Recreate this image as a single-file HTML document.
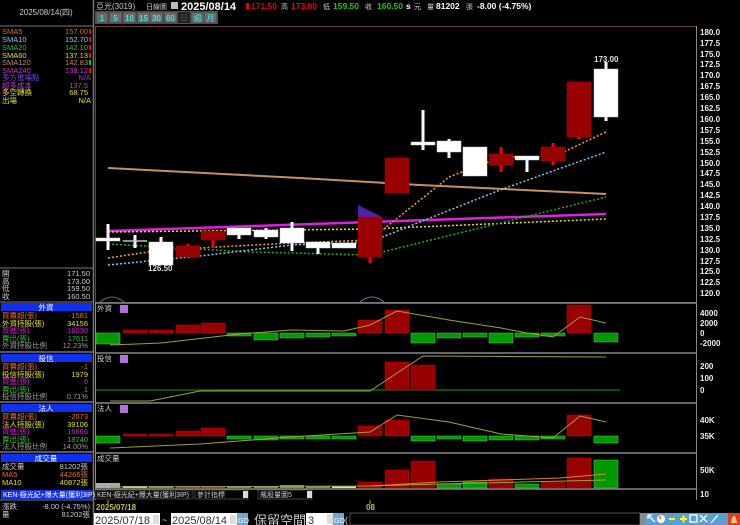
<!DOCTYPE html>
<html><head><meta charset="utf-8"><style>
html,body{margin:0;padding:0;background:#000;width:740px;height:525px;overflow:hidden}
svg{display:block}
text{font-family:"Liberation Sans","Noto Sans CJK TC",sans-serif}
</style></head><body>
<svg width="740" height="525" viewBox="0 0 740 525" xmlns="http://www.w3.org/2000/svg">
<rect width="740" height="525" fill="#000"/>
<rect x="0" y="0" width="93" height="489" fill="#000"/>
<line x1="93.5" y1="0" x2="93.5" y2="525" stroke="#777" stroke-width="1.5"/>
<line x1="0" y1="26" x2="93" y2="26" stroke="#777"/>
<text x="46" y="15" font-size="8" fill="#ccc" text-anchor="middle">2025/08/14(四)</text>
<g font-size="7.5">
<text x="2" y="34" fill="#e07020">SMA5</text><text x="88" y="34" fill="#e07020" text-anchor="end">157.00</text>
<text x="2" y="42" fill="#8ec8f0">SMA10</text><text x="88" y="42" fill="#8ec8f0" text-anchor="end">152.70</text>
<text x="2" y="50" fill="#30c030">SMA20</text><text x="88" y="50" fill="#30c030" text-anchor="end">142.10</text>
<text x="2" y="58" fill="#e0e030">SMA60</text><text x="88" y="58" fill="#e0e030" text-anchor="end">137.13</text>
<text x="2" y="65" fill="#c09060">SMA120</text><text x="88" y="65" fill="#c09060" text-anchor="end">142.83</text>
<text x="2" y="73" fill="#d030d0">SMA240</text><text x="88" y="73" fill="#d030d0" text-anchor="end">138.12</text>
<text x="2" y="80" fill="#8040e0">多方進場點</text><text x="91" y="80" fill="#8040e0" text-anchor="end">N/A</text>
<text x="2" y="88" fill="#c040c0">超多成本</text><text x="88" y="88" fill="#c040c0" text-anchor="end">137.5</text>
<text x="2" y="95" fill="#e0e030">多空轉換</text><text x="88" y="95" fill="#e0e030" text-anchor="end">68.75</text>
<text x="2" y="103" fill="#e0e030">出場</text><text x="91" y="103" fill="#e0e030" text-anchor="end">N/A</text>
</g>
<g fill="#f00"><rect x="89" y="29" width="2" height="5"/><rect x="89" y="37" width="2" height="5"/><rect x="89" y="45" width="2" height="5"/><rect x="89" y="53" width="2" height="5"/><rect x="89" y="68" width="2" height="5"/></g>
<rect x="89" y="60" width="2" height="5" fill="#0c0"/>
<line x1="0" y1="268" x2="93" y2="268" stroke="#777"/>
<g font-size="7.5" fill="#ccc">
<text x="2" y="276">開</text><text x="90" y="276" text-anchor="end">171.50</text>
<text x="2" y="284">高</text><text x="90" y="284" text-anchor="end">173.00</text>
<text x="2" y="291">低</text><text x="90" y="291" text-anchor="end">159.50</text>
<text x="2" y="299">收</text><text x="90" y="299" text-anchor="end">160.50</text>
</g>
<g font-size="7.5">
<line x1="0" y1="302" x2="93" y2="302" stroke="#777"/>
<rect x="1" y="303" width="91" height="8" fill="#1030f0"/><text x="46" y="310" fill="#fff" text-anchor="middle">外資</text>
<text x="2" y="318" fill="#e07020">買賣超(張)</text><text x="88" y="318" fill="#e07020" text-anchor="end">-1581</text>
<text x="2" y="326" fill="#e0e030">外資持股(張)</text><text x="88" y="326" fill="#e0e030" text-anchor="end">34156</text>
<text x="2" y="333" fill="#d020d0">買進(張)</text><text x="88" y="333" fill="#d020d0" text-anchor="end">16030</text>
<text x="2" y="341" fill="#30c030">賣出(張)</text><text x="88" y="341" fill="#30c030" text-anchor="end">17611</text>
<text x="2" y="348" fill="#999">外資持股比例</text><text x="88" y="348" fill="#999" text-anchor="end">12.23%</text>
<line x1="0" y1="352" x2="93" y2="352" stroke="#777" stroke-width="1.5"/>
<rect x="1" y="354" width="91" height="8" fill="#1030f0"/><text x="46" y="361" fill="#fff" text-anchor="middle">投信</text>
<text x="2" y="369" fill="#e07020">買賣超(張)</text><text x="88" y="369" fill="#e07020" text-anchor="end">-1</text>
<text x="2" y="377" fill="#e0e030">投信持股(張)</text><text x="88" y="377" fill="#e0e030" text-anchor="end">1979</text>
<text x="2" y="384" fill="#d020d0">買進(張)</text><text x="88" y="384" fill="#d020d0" text-anchor="end">0</text>
<text x="2" y="392" fill="#30c030">賣出(張)</text><text x="88" y="392" fill="#30c030" text-anchor="end">1</text>
<text x="2" y="399" fill="#999">投信持股比例</text><text x="88" y="399" fill="#999" text-anchor="end">0.71%</text>
<line x1="0" y1="402" x2="93" y2="402" stroke="#777" stroke-width="1.5"/>
<rect x="1" y="404" width="91" height="8" fill="#1030f0"/><text x="46" y="411" fill="#fff" text-anchor="middle">法人</text>
<text x="2" y="419" fill="#e07020">買賣超(張)</text><text x="88" y="419" fill="#e07020" text-anchor="end">-2073</text>
<text x="2" y="427" fill="#e0e030">法人持股(張)</text><text x="88" y="427" fill="#e0e030" text-anchor="end">39106</text>
<text x="2" y="434" fill="#d020d0">買進(張)</text><text x="88" y="434" fill="#d020d0" text-anchor="end">16666</text>
<text x="2" y="442" fill="#30c030">賣出(張)</text><text x="88" y="442" fill="#30c030" text-anchor="end">18740</text>
<text x="2" y="449" fill="#999">法人持股比例</text><text x="88" y="449" fill="#999" text-anchor="end">14.00%</text>
<line x1="0" y1="452" x2="93" y2="452" stroke="#777" stroke-width="1.5"/>
<rect x="1" y="454" width="91" height="8" fill="#1030f0"/><text x="46" y="461" fill="#fff" text-anchor="middle">成交量</text>
<text x="2" y="469" fill="#ccc">成交量</text><text x="88" y="469" fill="#ccc" text-anchor="end">81202張</text>
<text x="2" y="477" fill="#e07020">MA5</text><text x="88" y="477" fill="#e07020" text-anchor="end">44266張</text>
<text x="2" y="485" fill="#e0e030">MA10</text><text x="88" y="485" fill="#e0e030" text-anchor="end">40872張</text>
<rect x="1" y="490" width="91" height="9" fill="#1030f0"/><text x="3" y="497" fill="#fff" font-size="7">KEN-極光紀+爆大量(獲利3IP)</text>
<text x="2" y="509" fill="#ccc">漲跌</text><text x="90" y="509" fill="#ccc" text-anchor="end">-8.00 (-4.75%)</text>
<text x="2" y="517" fill="#ccc">量</text><text x="90" y="517" fill="#ccc" text-anchor="end">81202張</text>
</g>
<line x1="0" y1="500" x2="93" y2="500" stroke="#777"/>

<!-- top header -->
<g font-size="8.5" font-weight="bold">
<text x="96" y="9" fill="#ccc" font-weight="normal" font-size="8">亞光(3019)</text>
<text x="146" y="9" fill="#ccc" font-weight="normal" font-size="7">日線圖</text>
<rect x="171" y="2" width="7" height="7" fill="#bbb"/>
<text x="181" y="10" fill="#fff" font-size="11">2025/08/14</text>
<rect x="246" y="3" width="3" height="6" fill="#e00"/>
<text x="251" y="9" fill="#e00">171.50</text>
<text x="281" y="9" fill="#ccc" font-weight="normal" font-size="7">高</text><text x="291" y="9" fill="#e00">173.00</text>
<text x="323" y="9" fill="#ccc" font-weight="normal" font-size="7">低</text><text x="333" y="9" fill="#1c1">159.50</text>
<text x="365" y="9" fill="#ccc" font-weight="normal" font-size="7">收</text><text x="377" y="9" fill="#1c1">160.50</text>
<text x="406" y="9" fill="#fff">s</text><text x="414" y="9" fill="#ccc" font-weight="normal" font-size="7">元</text>
<text x="427" y="9" fill="#ccc" font-weight="normal" font-size="7">量</text><text x="436" y="9" fill="#fff">81202</text>
<text x="466" y="9" fill="#ccc" font-weight="normal" font-size="7">張</text><text x="477" y="9" fill="#fff">-8.00 (-4.75%)</text>
</g>
<rect x="95" y="11" width="123" height="13" fill="#555"/>
<g fill="#6a6a6a" stroke="#444"><rect x="96" y="12" width="12" height="11"/><rect x="109" y="12" width="13" height="11"/><rect x="123" y="12" width="13" height="11"/><rect x="137" y="12" width="13" height="11"/><rect x="150" y="12" width="13" height="11"/><rect x="164" y="12" width="13" height="11"/><rect x="191" y="12" width="13" height="11"/><rect x="204" y="12" width="13" height="11"/></g>
<rect x="178" y="12" width="12" height="11" fill="#222"/>
<g font-size="8" font-weight="bold" fill="#40e0e0" text-anchor="middle">
<text x="102" y="21">1</text><text x="115.5" y="21">5</text><text x="129.5" y="21">10</text><text x="143.5" y="21">15</text><text x="156.5" y="21">30</text><text x="170.5" y="21">60</text><text x="184" y="21" fill="#555" font-weight="normal">日</text><text x="197.5" y="21" font-weight="normal">週</text><text x="210.5" y="21" font-weight="normal">月</text>
</g>

<rect x="95.5" y="26.5" width="601" height="276" fill="none" stroke="#6b3a4a"/>
<line x1="95" y1="303" x2="697" y2="303" stroke="#888" stroke-width="1.5"/>
<line x1="95" y1="353" x2="697" y2="353" stroke="#888" stroke-width="1.5"/>
<line x1="95" y1="403" x2="697" y2="403" stroke="#888" stroke-width="1.5"/>
<line x1="95" y1="453" x2="697" y2="453" stroke="#888" stroke-width="1.5"/>
<line x1="95" y1="489" x2="697" y2="489" stroke="#888" stroke-width="1.5"/>
<line x1="696.5" y1="26" x2="696.5" y2="500" stroke="#888"/>
<line x1="95.5" y1="303" x2="95.5" y2="500" stroke="#888"/>

<g font-size="8" font-weight="bold" fill="#eee">
<text x="700" y="35">180.0</text><text x="700" y="46">177.5</text><text x="700" y="57">175.0</text><text x="700" y="67">172.5</text><text x="700" y="78">170.0</text><text x="700" y="89">167.5</text><text x="700" y="100">165.0</text><text x="700" y="111">162.5</text><text x="700" y="122">160.0</text><text x="700" y="133">157.5</text><text x="700" y="144">155.0</text><text x="700" y="155">152.5</text><text x="700" y="166">150.0</text><text x="700" y="176">147.5</text><text x="700" y="187">145.0</text><text x="700" y="198">142.5</text><text x="700" y="209">140.0</text><text x="700" y="220">137.5</text><text x="700" y="231">135.0</text><text x="700" y="242">132.5</text><text x="700" y="253">130.0</text><text x="700" y="264">127.5</text><text x="700" y="274">125.0</text><text x="700" y="285">122.5</text><text x="700" y="296">120.0</text>
<text x="700" y="316">4000</text><text x="700" y="326">2000</text><text x="700" y="336">0</text><text x="700" y="346">-2000</text>
<text x="700" y="369">200</text><text x="700" y="381">100</text><text x="700" y="393">0</text>
<text x="700" y="423">40K</text><text x="700" y="439">35K</text>
<text x="700" y="473">50K</text><text x="700" y="497">10</text>
</g>

<polyline points="108,168 300,178 420,185 606,194" fill="none" stroke="#c89060" stroke-width="2"/>
<polygon points="358,205 382,217 358,232" fill="#5020b0"/>
<polyline points="108,231 606,214" fill="none" stroke="#e020e0" stroke-width="2.5"/>
<polyline points="108,232 370,229 606,219" fill="none" stroke="#e8e020" stroke-width="1.5" stroke-dasharray="2,2"/>
<polyline points="108,244 250,252 370,255 606,197" fill="none" stroke="#20b020" stroke-width="1.5" stroke-dasharray="2,2"/>
<polyline points="108,265 200,256 292,245 370,242 500,190 606,152" fill="none" stroke="#80c8f0" stroke-width="1.5" stroke-dasharray="2,2"/>
<polyline points="108,258 161,250 292,243 344,241 370,240 449,177 501,157 553,157 606,132" fill="none" stroke="#f0a040" stroke-width="1.5" stroke-dasharray="2,2"/>

<g stroke-width="3">
<line x1="108" y1="224" x2="108" y2="250" stroke="#fff"/>
<line x1="135" y1="235" x2="135" y2="248" stroke="#fff"/>
<line x1="161" y1="237" x2="161" y2="265" stroke="#fff"/>
<line x1="188" y1="244" x2="188" y2="257" stroke="#f00"/>
<line x1="213" y1="231" x2="213" y2="248" stroke="#f00"/>
<line x1="239" y1="228" x2="239" y2="239" stroke="#fff"/>
<line x1="266" y1="228" x2="266" y2="239" stroke="#fff"/>
<line x1="292" y1="222" x2="292" y2="251" stroke="#fff"/>
<line x1="318" y1="242" x2="318" y2="254" stroke="#fff"/>
<line x1="370" y1="217" x2="370" y2="263" stroke="#f00"/>
<line x1="423" y1="110" x2="423" y2="150" stroke="#fff"/>
<line x1="449" y1="139" x2="449" y2="158" stroke="#fff"/>
<line x1="501" y1="147" x2="501" y2="172" stroke="#f00"/>
<line x1="527" y1="156" x2="527" y2="172" stroke="#fff"/>
<line x1="553" y1="143" x2="553" y2="165" stroke="#f00"/>
<line x1="579" y1="130" x2="579" y2="139" stroke="#f00"/>
<line x1="606" y1="62" x2="606" y2="121" stroke="#fff"/>
</g>
<g fill="#fff" stroke="#ccc" stroke-width="0.5">
<rect x="96" y="238" width="24" height="3"/>
<rect x="123" y="240.5" width="24" height="1" fill="#aaa"/>
<rect x="149" y="242" width="24" height="23"/>
<rect x="227" y="228" width="24" height="7"/>
<rect x="254" y="230" width="24" height="7"/>
<rect x="280" y="228" width="24" height="15"/>
<rect x="306" y="242" width="24" height="6"/>
<rect x="332" y="243" width="24" height="5"/>
<rect x="411" y="142" width="24" height="3"/>
<rect x="437" y="141" width="24" height="11"/>
<rect x="463" y="147" width="24" height="29"/>
<rect x="515" y="156" width="24" height="4"/>
<rect x="594" y="69" width="24" height="48"/>
</g>
<g fill="#990000" stroke="#b00" stroke-width="0.5">
<rect x="176" y="246" width="24" height="11"/>
<rect x="201" y="231" width="24" height="9"/>
<rect x="358" y="217" width="24" height="40"/>
<rect x="385" y="158" width="24" height="35"/>
<rect x="489" y="154" width="24" height="11"/>
<rect x="541" y="147" width="24" height="14"/>
<rect x="567" y="82" width="24" height="55"/>
</g>
<text x="148" y="271" font-size="8" font-weight="bold" fill="#ddd">126.50</text>
<text x="594" y="62" font-size="8" font-weight="bold" fill="#ddd">173.00</text>
<path d="M100,302 Q112,292 124,302" fill="none" stroke="#20a020"/>
<path d="M360,302 Q372,292 384,302" fill="none" stroke="#5080c0"/>

<g font-size="7.5" fill="#ccc"><text x="97" y="311">外資</text><text x="97" y="361">投信</text><text x="97" y="411">法人</text><text x="97" y="461">成交量</text></g>
<g fill="#b070e0"><rect x="120" y="305" width="8" height="8"/><rect x="120" y="355" width="8" height="8"/><rect x="120" y="405" width="8" height="8"/></g>

<g stroke="#5c5" stroke-width="0.5" fill="#009900">
<rect x="96" y="333" width="24" height="11"/><rect x="227" y="333" width="24" height="3"/><rect x="254" y="333" width="24" height="7"/><rect x="280" y="333" width="24" height="5"/><rect x="306" y="333" width="24" height="4"/><rect x="332" y="333" width="24" height="3"/>
<rect x="411" y="333" width="24" height="10"/><rect x="437" y="333" width="24" height="5"/><rect x="463" y="333" width="24" height="4"/><rect x="489" y="333" width="24" height="10"/><rect x="515" y="333" width="24" height="4"/><rect x="541" y="333" width="24" height="3"/><rect x="594" y="333" width="24" height="9"/>
</g>
<g stroke="#c00" stroke-width="0.5" fill="#990000">
<rect x="123" y="330" width="24" height="3"/><rect x="149" y="330" width="24" height="3"/><rect x="176" y="325" width="24" height="8"/><rect x="201" y="323" width="24" height="10"/><rect x="358" y="320" width="24" height="13"/><rect x="385" y="310" width="24" height="23"/><rect x="567" y="305" width="24" height="28"/>
</g>
<polyline points="110,345 161,343 213,337 239,334 292,330 344,331 370,325 397,311 449,320 501,328 527,333 553,337 580,317 606,323" fill="none" stroke="#a0a030"/>

<line x1="96" y1="390" x2="620" y2="390" stroke="#0a0" stroke-width="1"/>
<g stroke="#c00" stroke-width="0.5" fill="#990000"><rect x="385" y="362" width="24" height="28"/><rect x="411" y="365" width="24" height="25"/></g>
<polyline points="110,401 150,401 200,391 370,391 423,356 606,357" fill="none" stroke="#a0a030"/>

<g stroke="#5c5" stroke-width="0.5" fill="#009900">
<rect x="96" y="436" width="24" height="7"/><rect x="227" y="436" width="24" height="3"/><rect x="254" y="436" width="24" height="4"/><rect x="280" y="436" width="24" height="3"/><rect x="306" y="436" width="24" height="3"/><rect x="332" y="436" width="24" height="3"/>
<rect x="411" y="436" width="24" height="5"/><rect x="437" y="436" width="24" height="3"/><rect x="463" y="436" width="24" height="5"/><rect x="489" y="436" width="24" height="4"/><rect x="515" y="436" width="24" height="4"/><rect x="541" y="436" width="24" height="3"/><rect x="594" y="436" width="24" height="7"/>
</g>
<g stroke="#c00" stroke-width="0.5" fill="#990000">
<rect x="123" y="434" width="24" height="2"/><rect x="149" y="434" width="24" height="2"/><rect x="176" y="431" width="24" height="5"/><rect x="201" y="428" width="24" height="8"/><rect x="358" y="426" width="24" height="10"/><rect x="385" y="420" width="24" height="16"/><rect x="567" y="415" width="24" height="21"/>
</g>
<polyline points="110,448 200,444 290,437 370,432 397,415 449,422 501,434 553,438 580,416 606,422" fill="none" stroke="#a0a030"/>

<g stroke-width="0.5">
<rect x="96" y="483" width="24" height="5" fill="#aaa"/>
<rect x="123" y="486" width="24" height="2" fill="#e8d8b0"/>
<rect x="149" y="486" width="24" height="2" fill="#2c2"/>
<rect x="176" y="486" width="24" height="2" fill="#c22"/>
<rect x="201" y="486" width="24" height="2" fill="#c22"/>
<rect x="227" y="486" width="24" height="2" fill="#2c2"/>
<rect x="254" y="486" width="24" height="2" fill="#2c2"/>
<rect x="280" y="485" width="24" height="3" fill="#2c2"/>
<rect x="306" y="486" width="24" height="2" fill="#2c2"/>
<rect x="332" y="486" width="24" height="2" fill="#e8d8b0"/>
<rect x="358" y="482" width="24" height="6" fill="#990000" stroke="#c00"/>
<rect x="385" y="470" width="24" height="18" fill="#990000" stroke="#c00"/>
<rect x="411" y="461" width="24" height="27" fill="#990000" stroke="#c00"/>
<rect x="437" y="484" width="24" height="4" fill="#009900" stroke="#5c5"/>
<rect x="463" y="482" width="24" height="6" fill="#009900" stroke="#5c5"/>
<rect x="489" y="479" width="24" height="9" fill="#990000" stroke="#c00"/>
<rect x="515" y="484" width="24" height="4" fill="#009900" stroke="#5c5"/>
<rect x="541" y="482" width="24" height="6" fill="#990000" stroke="#c00"/>
<rect x="567" y="458" width="24" height="30" fill="#990000" stroke="#c00"/>
<rect x="594" y="460" width="24" height="28" fill="#009900" stroke="#5c5"/>
</g>
<polyline points="370,486 440,482 500,480 560,478 606,474" fill="none" stroke="#e08030"/>
<polyline points="110,487 370,486 440,484 606,480" fill="none" stroke="#a0a030"/>

<rect x="95" y="490" width="98" height="9" fill="#111" stroke="#666" stroke-width="0.5"/>
<text x="97" y="497" font-size="7" fill="#ccc">KEN-極光紀+爆大量(獲利3IP)</text>
<rect x="195" y="490" width="53" height="9" fill="#000" stroke="#888" stroke-width="0.5"/>
<text x="197" y="497" font-size="7" fill="#ccc">參計指標</text>
<rect x="243" y="491" width="5" height="7" fill="#ddd"/>
<rect x="258" y="490" width="54" height="9" fill="#000" stroke="#888" stroke-width="0.5"/>
<text x="260" y="497" font-size="7" fill="#ccc">飆股量圖5</text>
<rect x="307" y="491" width="5" height="7" fill="#ddd"/>
<line x1="108" y1="500" x2="108" y2="504" stroke="#aa3"/>
<line x1="370" y1="500" x2="370" y2="504" stroke="#aa3"/>
<text x="96" y="510" font-size="8" font-weight="bold" fill="#c0c040">2025/07/18</text>
<text x="366" y="510" font-size="8" font-weight="bold" fill="#c0c040">08</text>

<rect x="94" y="513" width="66" height="12" fill="#fff"/>
<text x="95" y="524" font-size="11" fill="#333">2025/07/18</text>
<rect x="153" y="515" width="6" height="9" fill="#ddd"/>
<text x="162" y="523" font-size="9" fill="#ddd">~</text>
<rect x="171" y="513" width="66" height="12" fill="#fff"/>
<text x="172" y="524" font-size="11" fill="#333">2025/08/14</text>
<rect x="230" y="515" width="6" height="9" fill="#ddd"/>
<rect x="237" y="513" width="11" height="12" fill="#6aa8d8"/>
<text x="238" y="523" font-size="7" fill="#fff">GO</text>
<text x="254" y="525" font-size="13" fill="#ccc">保留空間</text>
<rect x="306" y="513" width="27" height="12" fill="#fff"/>
<text x="308" y="524" font-size="11" fill="#333">3</text>
<rect x="327" y="514" width="6" height="10" fill="#ddd"/>
<rect x="333" y="513" width="11" height="12" fill="#6aa8d8"/>
<text x="334" y="523" font-size="7" fill="#fff">GO</text>
<text x="345" y="523" font-size="9" fill="#ccc">(</text>
<rect x="350" y="513" width="290" height="12" fill="#000" stroke="#555"/>
<rect x="640" y="513" width="5" height="12" fill="#888"/>
<rect x="645" y="513" width="83" height="12" fill="#5a9fd0"/>
<rect x="728" y="513" width="12" height="12" fill="#e04020"/>
<g stroke="#fff" stroke-width="1.3" fill="none">
<path d="M648,515 L655,522 M648,515 L648,519 M648,515 L652,515"/>
<circle cx="661" cy="519" r="4" fill="#fff" stroke="none"/>
<path d="M669,519 L675,519" stroke="#ff0" stroke-width="2"/>
<path d="M680,519 L687,519 M683.5,515.5 L683.5,522.5" stroke="#ff0" stroke-width="2"/>
<rect x="690" y="515" width="7" height="7"/>
<path d="M700,515 L707,522 M707,515 L700,522"/>
<path d="M711,523 L718,515"/>
</g>
<path d="M731,523 L737,523 L736,518 Q734,514 732,518 Z" fill="#fc8"/>
<rect x="659" y="516" width="2" height="3" fill="#f80"/>
</svg>
</body></html>
